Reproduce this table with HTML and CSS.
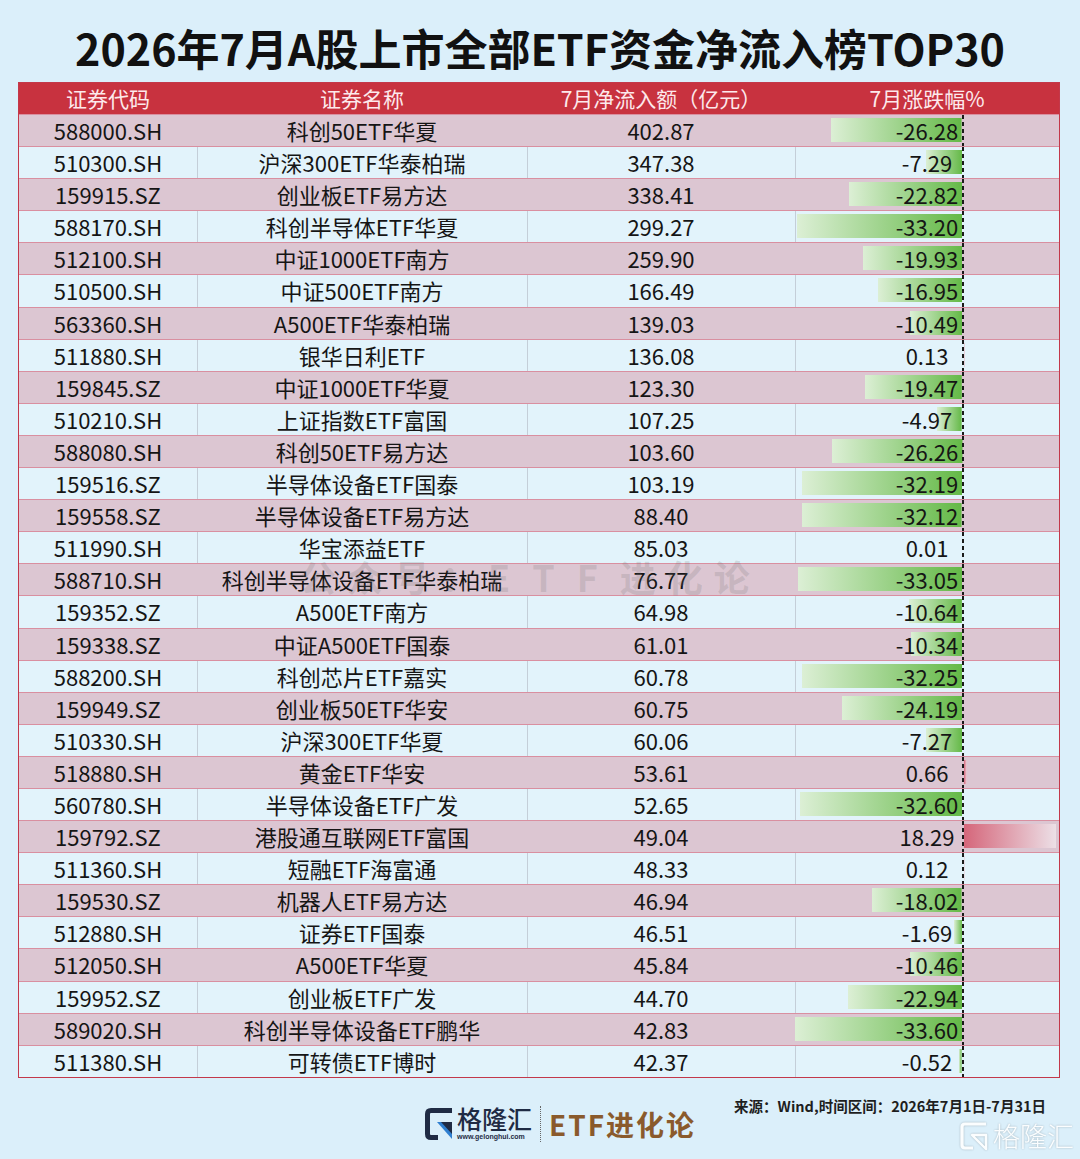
FILE: index.html
```html
<!DOCTYPE html>
<html lang="zh-CN">
<head>
<meta charset="utf-8">
<title>2026年7月A股上市全部ETF资金净流入榜TOP30</title>
<link rel="stylesheet" href="styles.css">
</head>
<body>
<h1 class="title">2026年7月A股上市全部ETF资金净流入榜TOP30</h1>
<div class="table">
  <div class="head"><div>证券代码</div><div>证券名称</div><div>7月净流入额（亿元）</div><div>7月涨跌幅%</div></div>
  <div class="row a"><div class="c">588000.SH</div><div class="c">科创50ETF华夏</div><div class="c">402.87</div><div class="c pct" style="--n:130.6px">-26.28</div></div>
  <div class="row b"><div class="c">510300.SH</div><div class="c">沪深300ETF华泰柏瑞</div><div class="c">347.38</div><div class="c pct" style="--n:36.2px">-7.29</div></div>
  <div class="row a"><div class="c">159915.SZ</div><div class="c">创业板ETF易方达</div><div class="c">338.41</div><div class="c pct" style="--n:113.4px">-22.82</div></div>
  <div class="row b"><div class="c">588170.SH</div><div class="c">科创半导体ETF华夏</div><div class="c">299.27</div><div class="c pct" style="--n:165px">-33.20</div></div>
  <div class="row a"><div class="c">512100.SH</div><div class="c">中证1000ETF南方</div><div class="c">259.90</div><div class="c pct" style="--n:99px">-19.93</div></div>
  <div class="row b"><div class="c">510500.SH</div><div class="c">中证500ETF南方</div><div class="c">166.49</div><div class="c pct" style="--n:84.2px">-16.95</div></div>
  <div class="row a"><div class="c">563360.SH</div><div class="c">A500ETF华泰柏瑞</div><div class="c">139.03</div><div class="c pct" style="--n:52.1px">-10.49</div></div>
  <div class="row b"><div class="c">511880.SH</div><div class="c">银华日利ETF</div><div class="c">136.08</div><div class="c pct" style="--p:0.7px">0.13</div></div>
  <div class="row a"><div class="c">159845.SZ</div><div class="c">中证1000ETF华夏</div><div class="c">123.30</div><div class="c pct" style="--n:96.8px">-19.47</div></div>
  <div class="row b"><div class="c">510210.SH</div><div class="c">上证指数ETF富国</div><div class="c">107.25</div><div class="c pct" style="--n:24.7px">-4.97</div></div>
  <div class="row a"><div class="c">588080.SH</div><div class="c">科创50ETF易方达</div><div class="c">103.60</div><div class="c pct" style="--n:130.5px">-26.26</div></div>
  <div class="row b"><div class="c">159516.SZ</div><div class="c">半导体设备ETF国泰</div><div class="c">103.19</div><div class="c pct" style="--n:160px">-32.19</div></div>
  <div class="row a"><div class="c">159558.SZ</div><div class="c">半导体设备ETF易方达</div><div class="c">88.40</div><div class="c pct" style="--n:159.6px">-32.12</div></div>
  <div class="row b"><div class="c">511990.SH</div><div class="c">华宝添益ETF</div><div class="c">85.03</div><div class="c pct" style="--p:0px">0.01</div></div>
  <div class="row a"><div class="c">588710.SH</div><div class="c">科创半导体设备ETF华泰柏瑞</div><div class="c">76.77</div><div class="c pct" style="--n:164.3px">-33.05</div></div>
  <div class="row b"><div class="c">159352.SZ</div><div class="c">A500ETF南方</div><div class="c">64.98</div><div class="c pct" style="--n:52.9px">-10.64</div></div>
  <div class="row a"><div class="c">159338.SZ</div><div class="c">中证A500ETF国泰</div><div class="c">61.01</div><div class="c pct" style="--n:51.4px">-10.34</div></div>
  <div class="row b"><div class="c">588200.SH</div><div class="c">科创芯片ETF嘉实</div><div class="c">60.78</div><div class="c pct" style="--n:160.3px">-32.25</div></div>
  <div class="row a"><div class="c">159949.SZ</div><div class="c">创业板50ETF华安</div><div class="c">60.75</div><div class="c pct" style="--n:120.2px">-24.19</div></div>
  <div class="row b"><div class="c">510330.SH</div><div class="c">沪深300ETF华夏</div><div class="c">60.06</div><div class="c pct" style="--n:36.1px">-7.27</div></div>
  <div class="row a"><div class="c">518880.SH</div><div class="c">黄金ETF华安</div><div class="c">53.61</div><div class="c pct" style="--p:3.3px">0.66</div></div>
  <div class="row b"><div class="c">560780.SH</div><div class="c">半导体设备ETF广发</div><div class="c">52.65</div><div class="c pct" style="--n:162px">-32.60</div></div>
  <div class="row a"><div class="c">159792.SZ</div><div class="c">港股通互联网ETF富国</div><div class="c">49.04</div><div class="c pct" style="--p:92px">18.29</div></div>
  <div class="row b"><div class="c">511360.SH</div><div class="c">短融ETF海富通</div><div class="c">48.33</div><div class="c pct" style="--p:0.6px">0.12</div></div>
  <div class="row a"><div class="c">159530.SZ</div><div class="c">机器人ETF易方达</div><div class="c">46.94</div><div class="c pct" style="--n:89.6px">-18.02</div></div>
  <div class="row b"><div class="c">512880.SH</div><div class="c">证券ETF国泰</div><div class="c">46.51</div><div class="c pct" style="--n:8.4px">-1.69</div></div>
  <div class="row a"><div class="c">512050.SH</div><div class="c">A500ETF华夏</div><div class="c">45.84</div><div class="c pct" style="--n:52px">-10.46</div></div>
  <div class="row b"><div class="c">159952.SZ</div><div class="c">创业板ETF广发</div><div class="c">44.70</div><div class="c pct" style="--n:114px">-22.94</div></div>
  <div class="row a"><div class="c">589020.SH</div><div class="c">科创半导体设备ETF鹏华</div><div class="c">42.83</div><div class="c pct" style="--n:167px">-33.60</div></div>
  <div class="row b"><div class="c">511380.SH</div><div class="c">可转债ETF博时</div><div class="c">42.37</div><div class="c pct" style="--n:2.6px">-0.52</div></div>
</div>

<div class="footer">
  <div class="brand">
    <svg class="glogo" width="29" height="32" viewBox="0 0 29 32" aria-hidden="true">
      <path d="M27 2.5H6Q2.5 2.5 2.5 6V26Q2.5 29.5 6 29.5H13" fill="none" stroke="#1f2b44" stroke-width="5"/>
      <path d="M12 14H27V31L12 14Z" fill="#2f7fd0"/>
      <path d="M16 14H27V26Z" fill="#1f2b44"/>
    </svg>
    <div class="gname">
      <span class="gcn">格隆汇</span>
      <span class="gurl">www.gelonghui.com</span>
    </div>
    <div class="sep"></div>
    <div class="etf">ETF进化论</div>
  </div>
  <div class="src">来源：Wind,时间区间：2026年7月1日-7月31日</div>
</div>

<div class="wm-center">公众号：<span class="wl">ETF</span>进化论</div>
<div class="wm-corner">
  <svg width="30" height="30" viewBox="0 0 30 30" aria-hidden="true">
    <path d="M27 3H6Q3 3 3 6V24Q3 27 6 27H14" fill="none" stroke="#ffffff" stroke-width="3.2"/>
    <path d="M13 14H27V28Z" fill="none" stroke="#ffffff" stroke-width="2.4" stroke-linejoin="round"/>
  </svg>
  <span>格隆汇</span>
</div>
</body>
</html>
```

FILE: styles.css
```css
html, body {
  margin: 0;
  padding: 0;
}
body {
  width: 1080px;
  height: 1159px;
  overflow: hidden;
  position: relative;
  background: #dbeffa;
  font-family: "Noto Sans CJK SC", "Noto Sans", sans-serif;
  color: #151515;
}
.title {
  margin: 0;
  height: 82px;
  box-sizing: border-box;
  padding-top: 22px;
  text-align: center;
  font-size: 43px;
  font-weight: 700;
  line-height: 50px;
  color: #111;
}
.table {
  margin-left: 18px;
  width: 1042px;
  box-sizing: border-box;
  border: 1px solid #c3384a;
}
.head, .row {
  display: grid;
  grid-template-columns: 178px 330px 268px 264px;
  text-align: center;
}
.head {
  height: 31px;
  background: #c8323f;
  color: #fde9ec;
  font-size: 21px;
  line-height: 31px;
}
.row {
  height: 32.1px;
  box-sizing: border-box;
  border-top: 1px solid #d98fa0;
  font-size: 22px;
  line-height: 31px;
}
.row.a {
  background: #dcc6d2;
}
.row.b {
  background: #e2f3fb;
}
.row.b .c + .c {
  box-shadow: inset 1px 0 #c4ced8;
}
.c {
  white-space: nowrap;
}
.pct {
  background:
    repeating-linear-gradient(to bottom, #1a1a1a 0 4px, transparent 4px 7px) 167px 0 / 2px 100% no-repeat,
    linear-gradient(to right, #dcefd5, #64b947) calc(167px - var(--n, 0px)) 3px / var(--n, 0px) 24px no-repeat,
    linear-gradient(to right, #d5667a, #ecdfe6) 169px 3px / var(--p, 0px) 24px no-repeat;
}
.footer {
  display: flex;
  align-items: flex-start;
  padding-top: 19px;
}
.brand {
  display: flex;
  align-items: center;
  margin-left: 425px;
  margin-top: 9px;
}
.glogo {
  display: block;
}
.gname {
  display: flex;
  flex-direction: column;
  margin-left: 3px;
}
.gcn {
  font-size: 25px;
  line-height: 25px;
  font-weight: 500;
  color: #1f2b44;
}
.gurl {
  margin-top: 2px;
  font-size: 7px;
  line-height: 8px;
  font-weight: 700;
  color: #1f2b44;
  font-family: "Liberation Sans", Arial, sans-serif;
}
.sep {
  width: 0;
  height: 36px;
  border-left: 1px dotted #666;
  margin: 0 8px 0 8px;
}
.etf {
  font-size: 28px;
  line-height: 36px;
  font-weight: 700;
  color: #8a5a2c;
  letter-spacing: 2px;
}
.src {
  margin-left: auto;
  margin-right: 34px;
  font-size: 14.5px;
  line-height: 18px;
  font-weight: 700;
  color: #1e1e1e;
}
.wm-center {
  position: absolute;
  left: 300px;
  top: 554px;
  font-size: 36px;
  line-height: 44px;
  font-weight: 700;
  letter-spacing: 11px;
  color: rgba(110, 110, 110, 0.2);
  pointer-events: none;
  white-space: nowrap;
}
.wm-center .wl {
  letter-spacing: 22px;
}
.wm-corner {
  position: absolute;
  right: 6px;
  bottom: 8px;
  display: flex;
  align-items: center;
  gap: 4px;
  opacity: 0.9;
  filter: drop-shadow(0 0 1px rgba(0, 0, 0, 0.25));
}
.wm-corner span {
  font-size: 27px;
  line-height: 30px;
  font-weight: 300;
  color: #ffffff;
}
```
